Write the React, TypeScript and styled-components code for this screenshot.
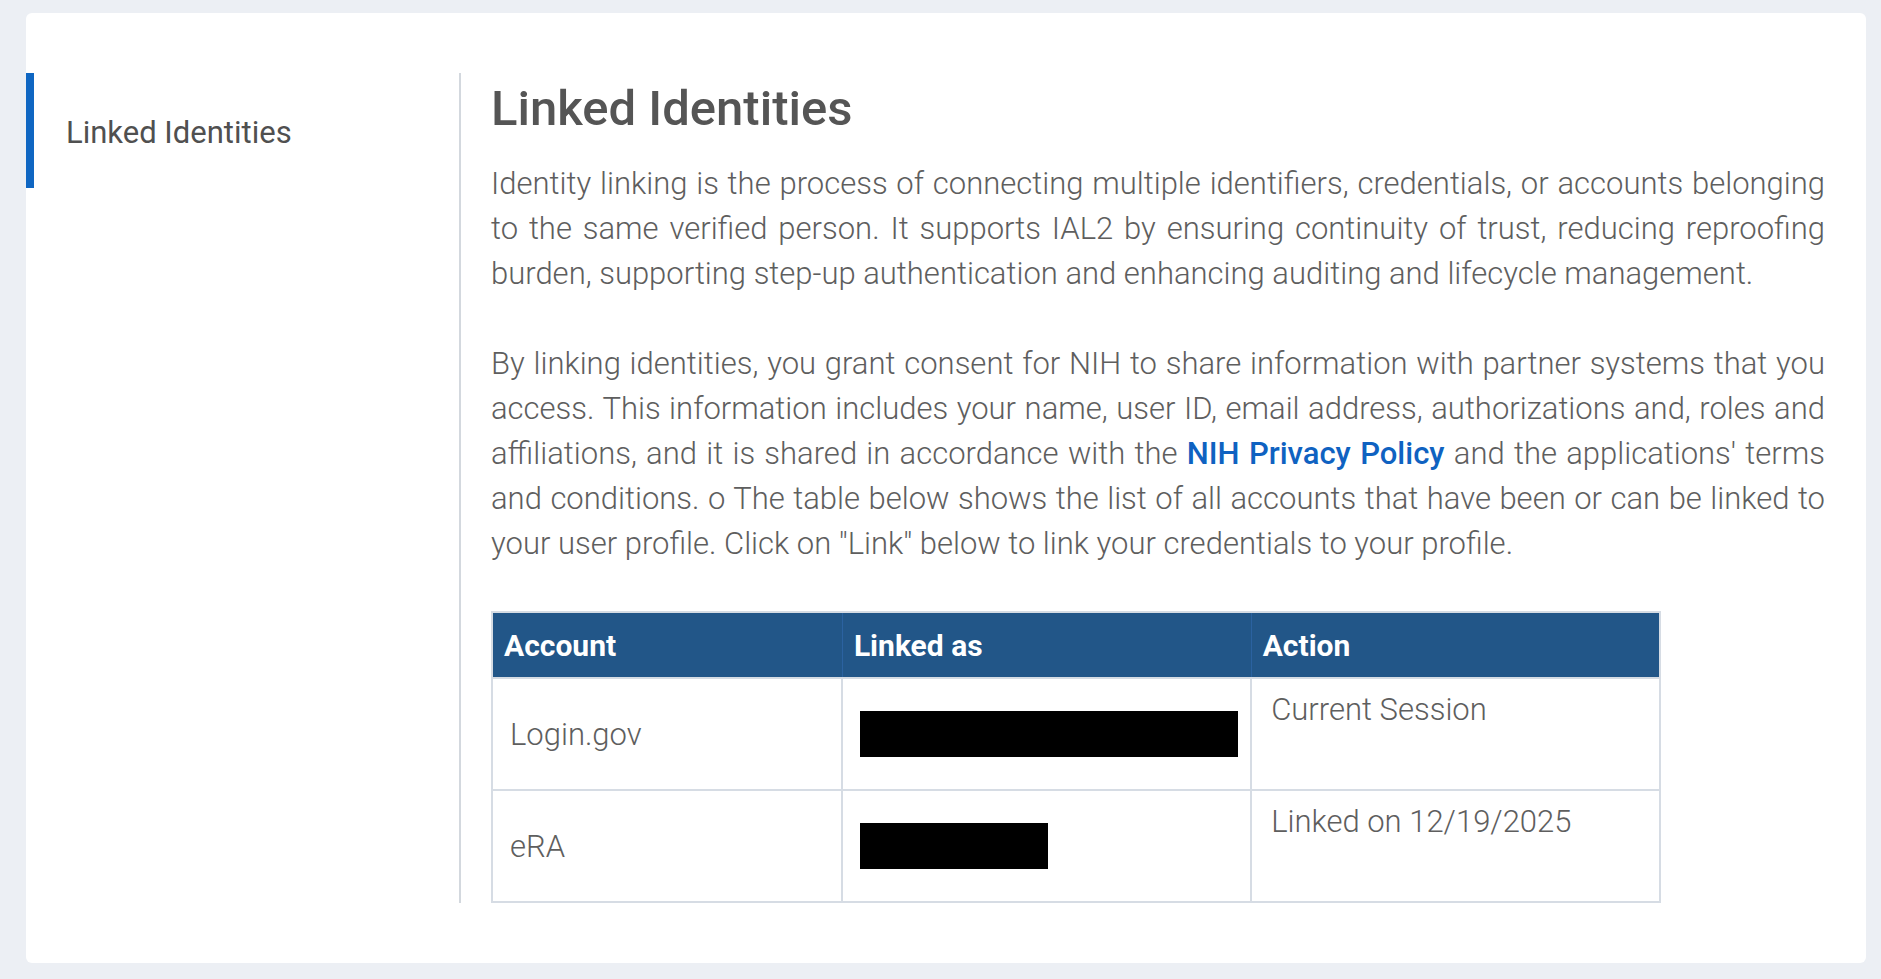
import React from "react";
import styled, { createGlobalStyle } from "styled-components";

const Global = createGlobalStyle`
  html, body { margin: 0; padding: 0; background: #eceff4; }
  body { font-family: Roboto, "Noto Sans", Arial, sans-serif; }
  * { box-sizing: border-box; }
`;

const Page = styled.div`
  padding: 13px 15px 16px 26px;
  min-height: 979px;
`;

const Card = styled.div`
  background: #ffffff;
  border-radius: 6px;
  display: flex;
  padding: 60px 41px 60px 0;
`;

const Sidebar = styled.nav`
  width: 435px;
  flex-shrink: 0;
  border-right: 2px solid #d3d8de;
`;

const NavItem = styled.div<{ $active?: boolean }>`
  height: 115px;
  display: flex;
  align-items: center;
  padding-left: 32px;
  padding-top: 3px;
  border-left: 8px solid ${(p) => (p.$active ? "#0f66c2" : "transparent")};
  font-size: 31px;
  font-weight: 400;
  color: #505050;
`;

const Content = styled.main`
  flex: 1;
  padding-left: 30px;
`;

const Heading = styled.h1`
  margin: 8px 0 24px;
  font-size: 49px;
  line-height: 56px;
  font-weight: 500;
  color: #555555;
`;

const Paragraph = styled.p`
  margin: 0 0 45px;
  font-size: 31px;
  line-height: 45px;
  font-weight: 300;
  color: #5e5e5e;
  text-align: justify;
`;

const Link = styled.a`
  color: #0f62c1;
  font-weight: 500;
  text-decoration: none;
`;

const Table = styled.table`
  width: 1170px;
  border-collapse: collapse;
  table-layout: fixed;
  border: 2px solid #d6dce4;
`;

const HeadCell = styled.th<{ $w: string }>`
  width: ${(p) => p.$w};
  background: #225688;
  color: #ffffff;
  text-align: left;
  font-size: 30px;
  font-weight: 700;
  height: 66px;
  padding: 0 11px;
  border-left: 1px solid #2b62a0;
`;

const Cell = styled.td<{ $top?: boolean }>`
  height: 112px;
  border: 2px solid #d6dce4;
  vertical-align: ${(p) => (p.$top ? "top" : "middle")};
  padding: ${(p) => (p.$top ? "8px 19px" : "0 17px")};
  font-size: 31px;
  line-height: 45px;
  font-weight: 300;
  color: #5e5e5e;
`;

const Redacted = styled.div<{ $w: number }>`
  width: ${(p) => p.$w}px;
  height: 46px;
  background: #000;
`;

const rows = [
  { account: "Login.gov", redact: 378, action: "Current Session" },
  { account: "eRA", redact: 188, action: "Linked on 12/19/2025" },
];

export default function App() {
  return (
    <>
      <Global />
      <Page>
        <Card>
          <Sidebar>
            <NavItem $active>Linked Identities</NavItem>
          </Sidebar>
          <Content>
            <Heading>Linked Identities</Heading>
            <Paragraph>
              Identity linking is the process of connecting multiple identifiers, credentials, or
              accounts belonging to the same verified person. It supports IAL2 by ensuring
              continuity of trust, reducing reproofing burden, supporting step-up authentication and
              enhancing auditing and lifecycle management.
            </Paragraph>
            <Paragraph>
              By linking identities, you grant consent for NIH to share information with partner
              systems that you access. This information includes your name, user ID, email address,
              authorizations and, roles and affiliations, and it is shared in accordance with the{" "}
              <Link href="#">NIH Privacy Policy</Link> and the applications' terms and conditions. o
              The table below shows the list of all accounts that have been or can be linked to your
              user profile. Click on "Link" below to link your credentials to your profile.
            </Paragraph>
            <Table>
              <thead>
                <tr>
                  <HeadCell $w="30%">Account</HeadCell>
                  <HeadCell $w="35%">Linked as</HeadCell>
                  <HeadCell $w="35%">Action</HeadCell>
                </tr>
              </thead>
              <tbody>
                {rows.map((r) => (
                  <tr key={r.account}>
                    <Cell>{r.account}</Cell>
                    <Cell>
                      <Redacted $w={r.redact} />
                    </Cell>
                    <Cell $top>{r.action}</Cell>
                  </tr>
                ))}
              </tbody>
            </Table>
          </Content>
        </Card>
      </Page>
    </>
  );
}
